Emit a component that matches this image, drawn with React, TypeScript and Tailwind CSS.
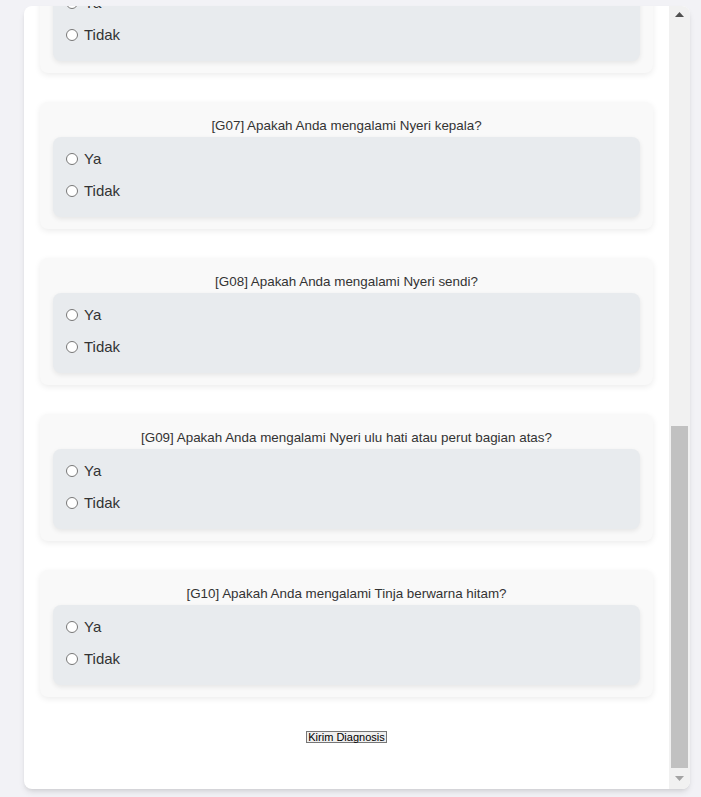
import React, { useLayoutEffect, useRef } from 'react';

const questions = [
  { code: 'G01', text: 'Demam' },
  { code: 'G02', text: 'Mual' },
  { code: 'G03', text: 'Muntah' },
  { code: 'G04', text: 'Nafsu makan menurun' },
  { code: 'G05', text: 'Badan lemas' },
  { code: 'G06', text: 'Diare' },
  { code: 'G07', text: 'Nyeri kepala' },
  { code: 'G08', text: 'Nyeri sendi' },
  { code: 'G09', text: 'Nyeri ulu hati atau perut bagian atas' },
  { code: 'G10', text: 'Tinja berwarna hitam' },
];

const QuestionCard = ({ code, text }: { code: string; text: string }) => (
  <div className="bg-[#f9f9f9] rounded-lg shadow-[0_2px_6px_rgba(0,0,0,0.08)] px-[13px] pt-[14px] pb-3">
    <p className="text-center text-[13.4px] leading-5 text-[#333] mb-px">
      [{code}] Apakah Anda mengalami {text}?
    </p>
    <div className="bg-[#e8ebee] rounded-lg shadow-[0_2px_5px_rgba(0,0,0,0.08)] pl-3 pt-[10px] pb-[14px] flex flex-col gap-2">
      <label className="flex items-center gap-[6px] h-6 text-[15px] text-[#333]">
        <input type="radio" name={code} value="ya" className="w-[12px] h-[12px] ml-px" />
        Ya
      </label>
      <label className="flex items-center gap-[6px] h-6 text-[15px] text-[#333]">
        <input type="radio" name={code} value="tidak" className="w-[12px] h-[12px] ml-px" />
        Tidak
      </label>
    </div>
  </div>
);

// drawn scrollbar, the page is shown scrolled to the bottom
const ScrollBar = () => (
  <div className="w-[21px] bg-[#f1f1f1] flex flex-col">
    <div className="h-[17px] flex items-center justify-center">
      <svg width="9" height="5" viewBox="0 0 9 5">
        <path d="M0 5 L4.5 0 L9 5 Z" fill="#505050" />
      </svg>
    </div>
    <div className="flex-1 flex flex-col justify-end px-[2px]">
      <div className="h-[342px] bg-[#c1c1c1]" />
    </div>
    <div className="h-[21px] flex items-center justify-center">
      <svg width="9" height="5" viewBox="0 0 9 5">
        <path d="M0 0 L9 0 L4.5 5 Z" fill="#a3a3a3" />
      </svg>
    </div>
  </div>
);

export default function App() {
  const boxRef = useRef<HTMLDivElement>(null);

  useLayoutEffect(() => {
    if (boxRef.current) {
      boxRef.current.scrollTop = boxRef.current.scrollHeight;
    }
  }, []);

  return (
    <div
      className="min-h-screen bg-[#f2f2f6] pt-[6px] pl-6"
      style={{ fontFamily: '"Liberation Sans", Arial, sans-serif' }}
    >
      <div className="w-[666px] h-[783px] flex bg-white rounded-lg shadow-md overflow-hidden">
        <div ref={boxRef} className="flex-1 overflow-hidden p-4">
          <div className="mb-[25px]">
            <h1 className="text-2xl font-bold text-center text-[#333]">Diagnosa Penyakit</h1>
            <p className="text-sm text-center text-[#555]">Jawab pertanyaan berikut sesuai gejala yang Anda alami.</p>
          </div>
          <form onSubmit={(e) => e.preventDefault()}>
            <div className="flex flex-col gap-[29px]">
              {questions.map((q) => (
                <QuestionCard key={q.code} code={q.code} text={q.text} />
              ))}
            </div>
            <div className="flex justify-center pt-[34px] pb-[30px]">
              <button
                type="submit"
                className="border border-[#767676] bg-[#efefef] text-[11px] leading-[10px] text-black px-px"
              >
                Kirim Diagnosis
              </button>
            </div>
          </form>
        </div>
        <ScrollBar />
      </div>
    </div>
  );
}
